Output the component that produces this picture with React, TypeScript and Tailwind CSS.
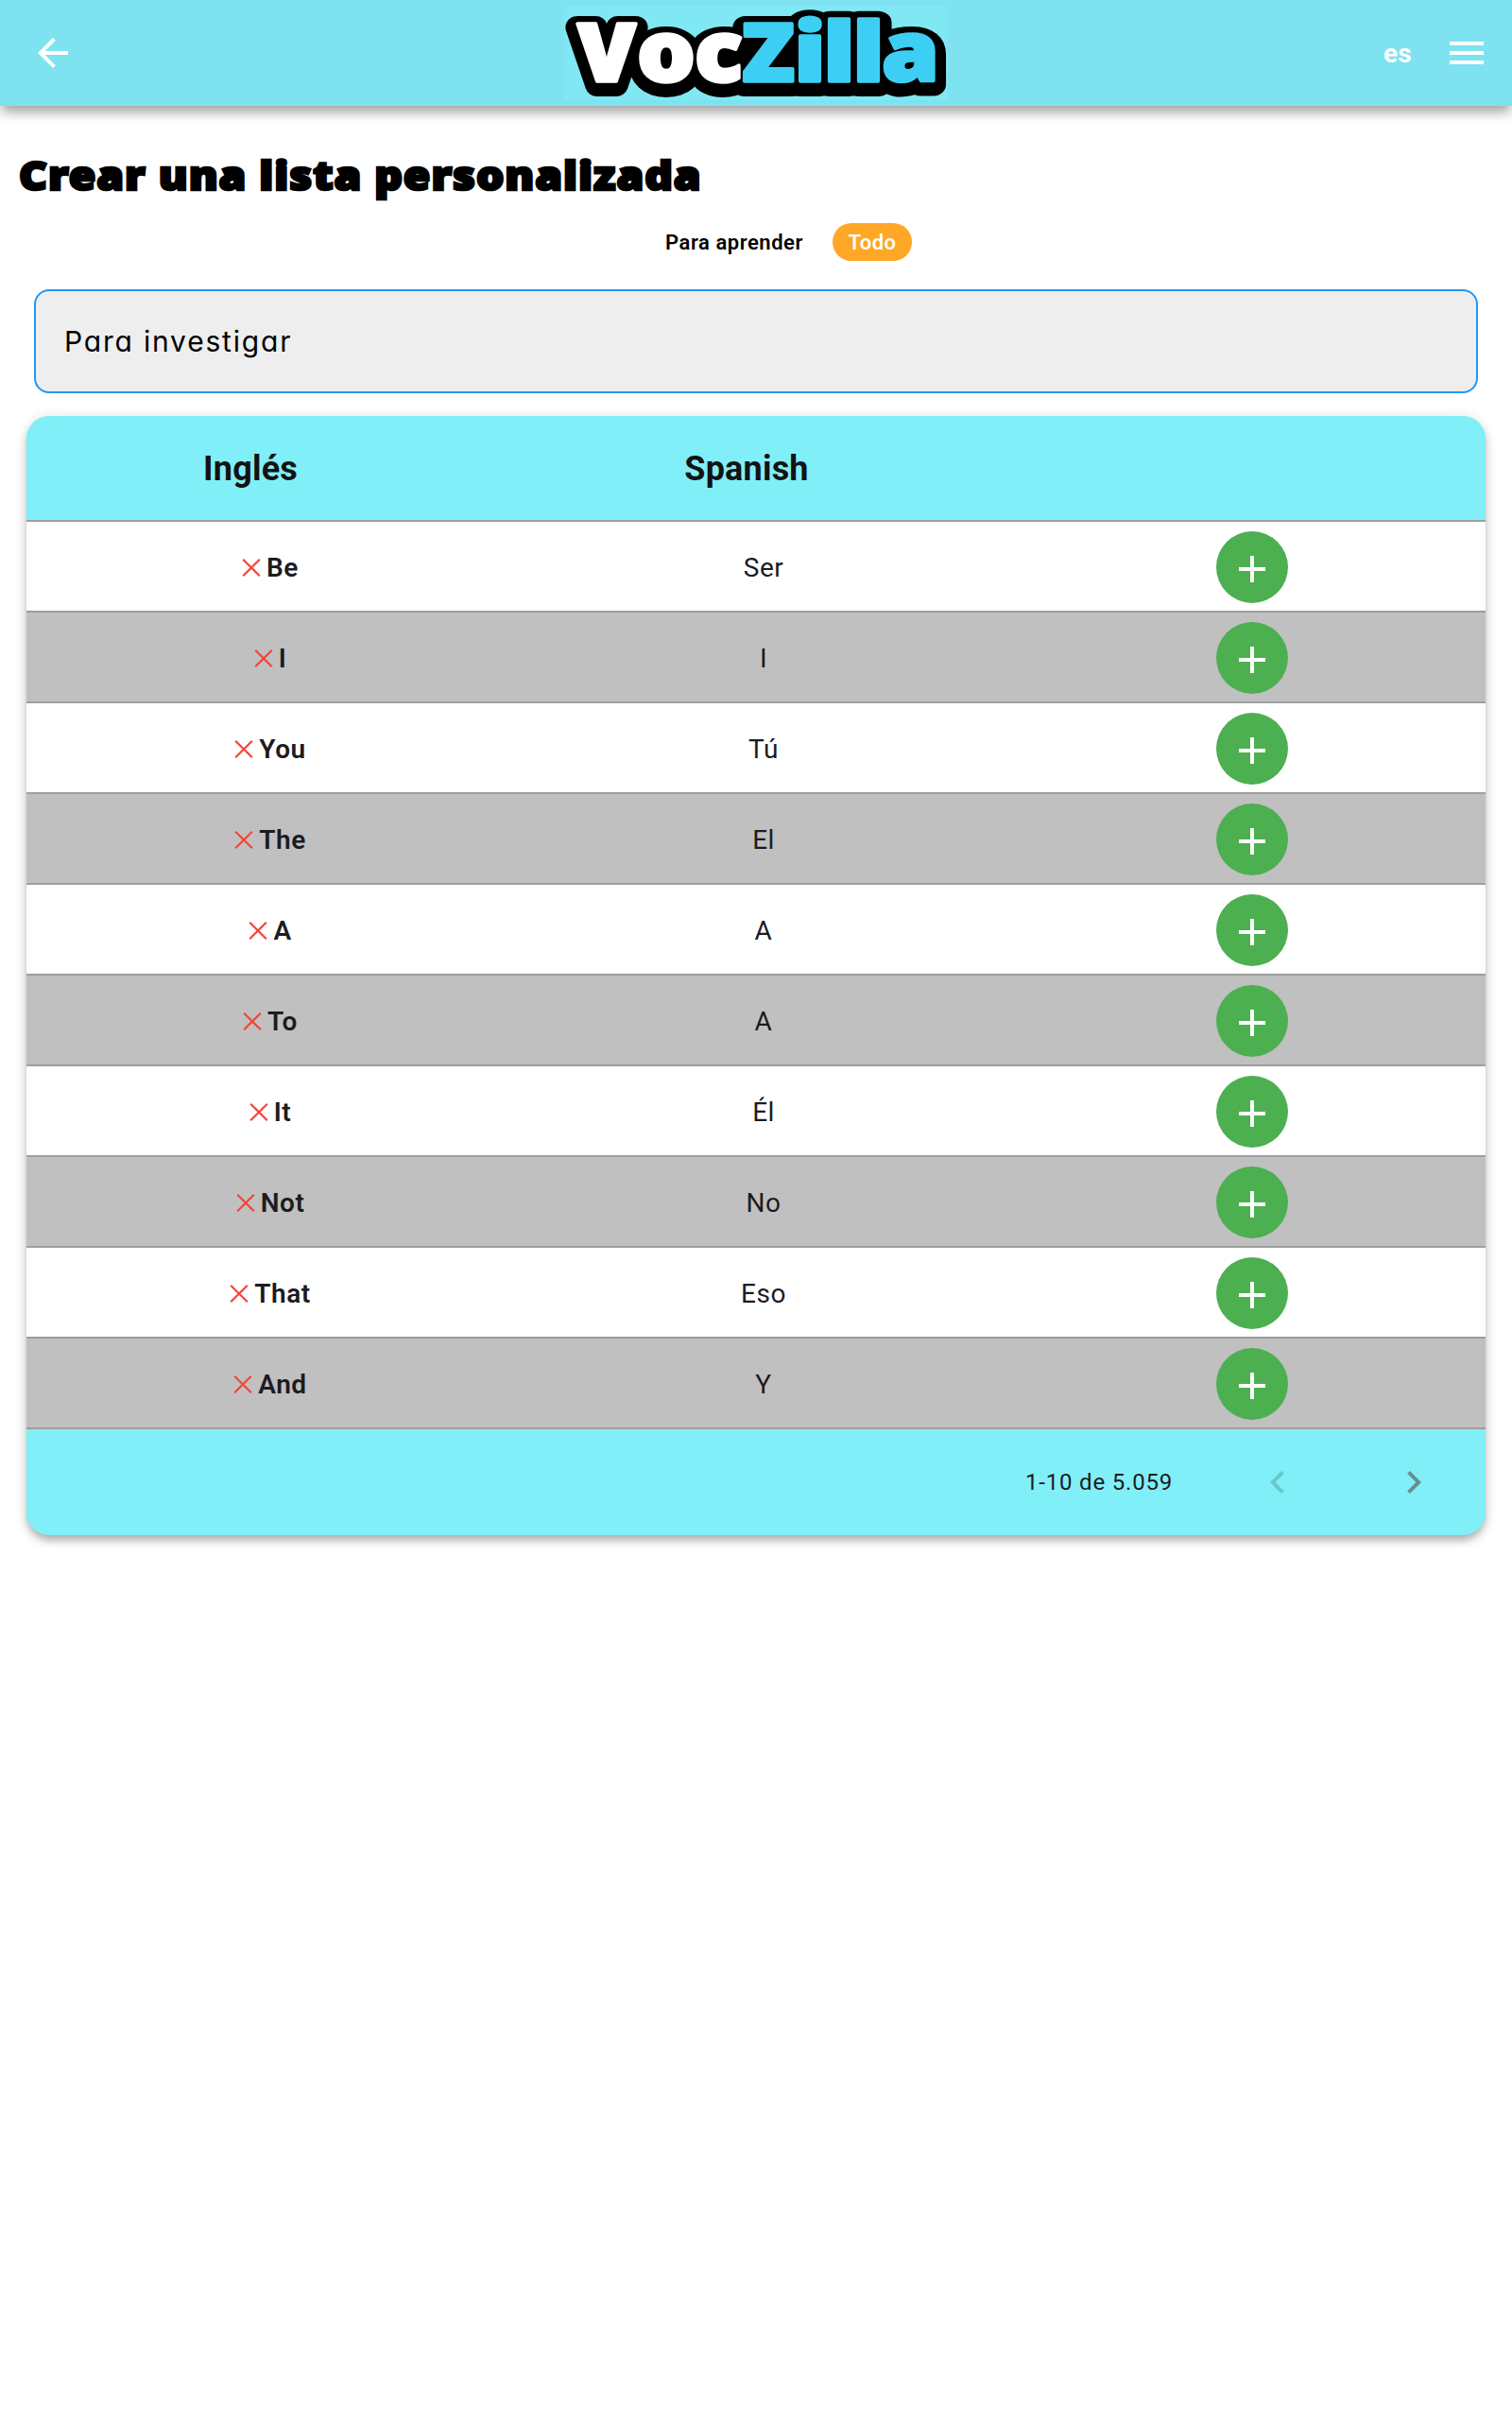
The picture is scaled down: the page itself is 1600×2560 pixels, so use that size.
const rows = [
  ["Be", "Ser"],
  ["I", "I"],
  ["You", "Tú"],
  ["The", "El"],
  ["A", "A"],
  ["To", "A"],
  ["It", "Él"],
  ["Not", "No"],
  ["That", "Eso"],
  ["And", "Y"],
];

// Each logo letter: glyph, left edge, advance width, font size, fill
const letters: [string, number, number, number, string][] = [
  ["V", 14, 62, 85, "#fff"],
  ["o", 77, 62, 88, "#fff"],
  ["c", 138, 51, 88, "#fff"],
  ["Z", 188, 56, 85, "#3dcff3"],
  ["i", 243, 34, 87, "#3dcff3"],
  ["l", 274, 34, 87, "#3dcff3"],
  ["l", 305, 34, 87, "#3dcff3"],
  ["a", 336, 61, 88, "#3dcff3"],
];

function LogoLayer({ dy, stroke, width }: { dy: number; stroke?: string; width: number }) {
  return (
    <g transform={`translate(0 ${dy})`} strokeWidth={width} strokeLinejoin="round">
      {letters.map(([c, x, w, size, fill], i) => (
        <text key={i} x={x} y={79.5} fontSize={size} textLength={w} lengthAdjust="spacingAndGlyphs" fill={stroke ?? fill} stroke={stroke ?? fill}>
          {c}
        </text>
      ))}
    </g>
  );
}

function Logo() {
  return (
    <svg width="406" height="100" viewBox="0 0 406 100" className="bg-[#80e8f3] font-['Noto_Sans',sans-serif] font-black" aria-label="VocZilla">
      <LogoLayer dy={4.5} stroke="#000" width={24} />
      <LogoLayer dy={0} width={3.4} />
    </svg>
  );
}

function Header() {
  return (
    <header className="grid h-28 grid-cols-[1fr_406px_1fr] items-center bg-[#7ee2f0] shadow-[0_8px_12px_-2px_rgba(0,0,0,0.34),0_4px_16px_0_rgba(0,0,0,0.08)]">
      <svg width="48" height="48" viewBox="0 0 24 24" fill="#fff" className="ml-8">
        <path d="M20 11H7.83l5.59-5.59L12 4l-8 8 8 8 1.41-1.41L7.83 13H20v-2z" />
      </svg>
      <Logo />
      <div className="flex items-center justify-end gap-[34px] pr-[24px]">
        <span className="pt-[2px] text-[28px] leading-none font-bold tracking-[0.3px] text-white">es</span>
        <svg width="48" height="48" viewBox="0 0 24 24" fill="#fff">
          <path d="M3 18h18v-2H3v2zm0-5h18v-2H3v2zm0-7v2h18V6H3z" />
        </svg>
      </div>
    </header>
  );
}

const columns = "grid grid-cols-[509px_541px_494px] items-center";

export default function App() {
  return (
    <div className="h-[2560px] w-[1600px] overflow-hidden bg-white font-[Roboto,sans-serif] text-[#1c1b1f]">
      <Header />
      <h1 className="mt-[47px] ml-5 h-[53px] w-fit origin-left scale-x-[1.1] font-['Noto_Sans',sans-serif] text-[42px] leading-[52px] font-black tracking-[0.9px] whitespace-nowrap text-black [-webkit-text-stroke:2.6px_#000]">
        Crear una lista personalizada
      </h1>
      <div className="mt-6 flex h-10 items-center pl-[704px] text-[22px] font-semibold">
        <span className="w-[177px] tracking-[0.55px] text-black">Para aprender</span>
        <span className="flex h-10 w-[84px] items-center justify-center rounded-[20px] bg-[#ffa726] tracking-[0.5px] text-white">Todo</span>
      </div>
      <div className="mx-9 mt-[30px] flex h-[110px] items-center rounded-2xl border-2 border-[#2196f3] bg-[#eee] pl-[30px] font-[Inter,sans-serif] text-[30px] font-normal tracking-[1.8px] text-black [font-feature-settings:'cv11']">
        Para investigar
      </div>

      <section className="mx-7 mt-6 overflow-hidden rounded-3xl bg-[#80eff7] shadow-[0_7px_10px_-2px_rgba(0,0,0,0.28),0_2px_14px_0_rgba(0,0,0,0.14)]">
        <div className={`${columns} h-28 border-b-2 border-[#9e9e9e] pt-[2px] text-center text-[36px] font-bold tracking-[0.2px] text-[#131313]`}>
          <span className="pr-[35px]">Inglés</span>
          <span className="pr-[35px]">Spanish</span>
        </div>
        {rows.map(([en, es], i) => (
          <div key={i} className={`${columns} h-24 border-b-2 border-[#9e9e9e] pt-[2px] text-[28px] ${i % 2 ? "bg-[#c0c0c0]" : "bg-white"}`}>
            <span className="flex items-center justify-center pt-[2px] pl-[33px] font-semibold tracking-[0.5px]">
              <svg width="32" height="32" viewBox="0 0 32 32" stroke="#f44336" strokeWidth="2.2" className="-ml-8">
                <path d="M7.2 6.7l17.6 17.6M24.8 6.7l-17.6 17.6" />
              </svg>
              {en}
            </span>
            <span className="pt-[2px] pl-px text-center tracking-[0.5px]">{es}</span>
            <span className="flex justify-center">
              <span className="flex size-[76px] items-center justify-center rounded-full bg-[#4caf50]">
                <svg width="28" height="28" viewBox="0 0 28 28" fill="#fff" className="mt-1">
                  <path d="M12 0h4v12h12v4H16v12h-4V16H0v-4h12z" />
                </svg>
              </span>
            </span>
          </div>
        ))}
        <div className="flex h-28 items-center justify-end pr-[52px] text-[24px]">
          <span className="tracking-[0.8px]">1-10 de 5.059</span>
          <svg width="48" height="48" viewBox="0 0 24 24" fill="#6cc5cb" className="ml-[87px]">
            <path d="M15.41 7.41L14 6l-6 6 6 6 1.41-1.41L10.83 12z" />
          </svg>
          <svg width="48" height="48" viewBox="0 0 24 24" fill="#668f94" className="ml-24">
            <path d="M10 6L8.59 7.41 13.17 12l-4.58 4.59L10 18l6-6z" />
          </svg>
        </div>
      </section>
    </div>
  );
}
